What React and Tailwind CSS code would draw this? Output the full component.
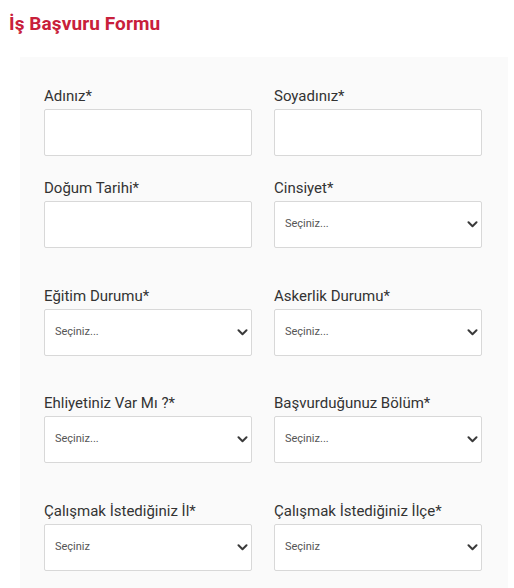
import React from "react";

function Chevron() {
  return (
    <svg width="11" height="7" viewBox="0 0 11 7" fill="none">
      <path d="M1.5 1.3 L5.5 5.2 L9.5 1.3" stroke="#3a3a3a" strokeWidth="2" strokeLinecap="round" strokeLinejoin="round" />
    </svg>
  );
}

function Field({ label, select, placeholder, mt }) {
  return (
    <div className={mt}>
      <div className="text-[15px] leading-[20px] text-[#333]">{label}</div>
      {select ? (
        <div className="mt-[3px] h-[47px] bg-white border border-[#d8d8d8] rounded-[2px] flex items-center justify-between pl-[10px] pr-[3px]">
          <span className="text-[11px] text-[#555]">{placeholder}</span>
          <Chevron />
        </div>
      ) : (
        <div className="mt-[3px] h-[47px] bg-white border border-[#d8d8d8] rounded-[2px]" />
      )}
    </div>
  );
}

export default function App() {
  return (
    <div className="min-h-[588px] bg-white" style={{ fontFamily: "Roboto, 'Noto Sans', sans-serif" }}>
      <div className="pt-[12px] pl-[9px] text-[19px] leading-[24px] font-bold tracking-[0.1px] text-[#c8203b]">
        İş Başvuru Formu
      </div>
      <div className="mt-[21px] ml-[20px] w-[488px] bg-[#fafafa] pt-[29px] pl-[24px] pb-[20px]">
        <div className="grid grid-cols-[208px_208px] gap-x-[22px]">
          <Field label="Adınız*" mt="" />
          <Field label="Soyadınız*" mt="" />
          <Field label="Doğum Tarihi*" mt="mt-[22px]" />
          <Field label="Cinsiyet*" select placeholder="Seçiniz..." mt="mt-[22px]" />
          <Field label="Eğitim Durumu*" select placeholder="Seçiniz..." mt="mt-[38px]" />
          <Field label="Askerlik Durumu*" select placeholder="Seçiniz..." mt="mt-[38px]" />
          <Field label="Ehliyetiniz Var Mı ?*" select placeholder="Seçiniz..." mt="mt-[37px]" />
          <Field label="Başvurduğunuz Bölüm*" select placeholder="Seçiniz..." mt="mt-[37px]" />
          <Field label="Çalışmak İstediğiniz İl*" select placeholder="Seçiniz" mt="mt-[38px]" />
          <Field label="Çalışmak İstediğiniz İlçe*" select placeholder="Seçiniz" mt="mt-[38px]" />
        </div>
      </div>
    </div>
  );
}
